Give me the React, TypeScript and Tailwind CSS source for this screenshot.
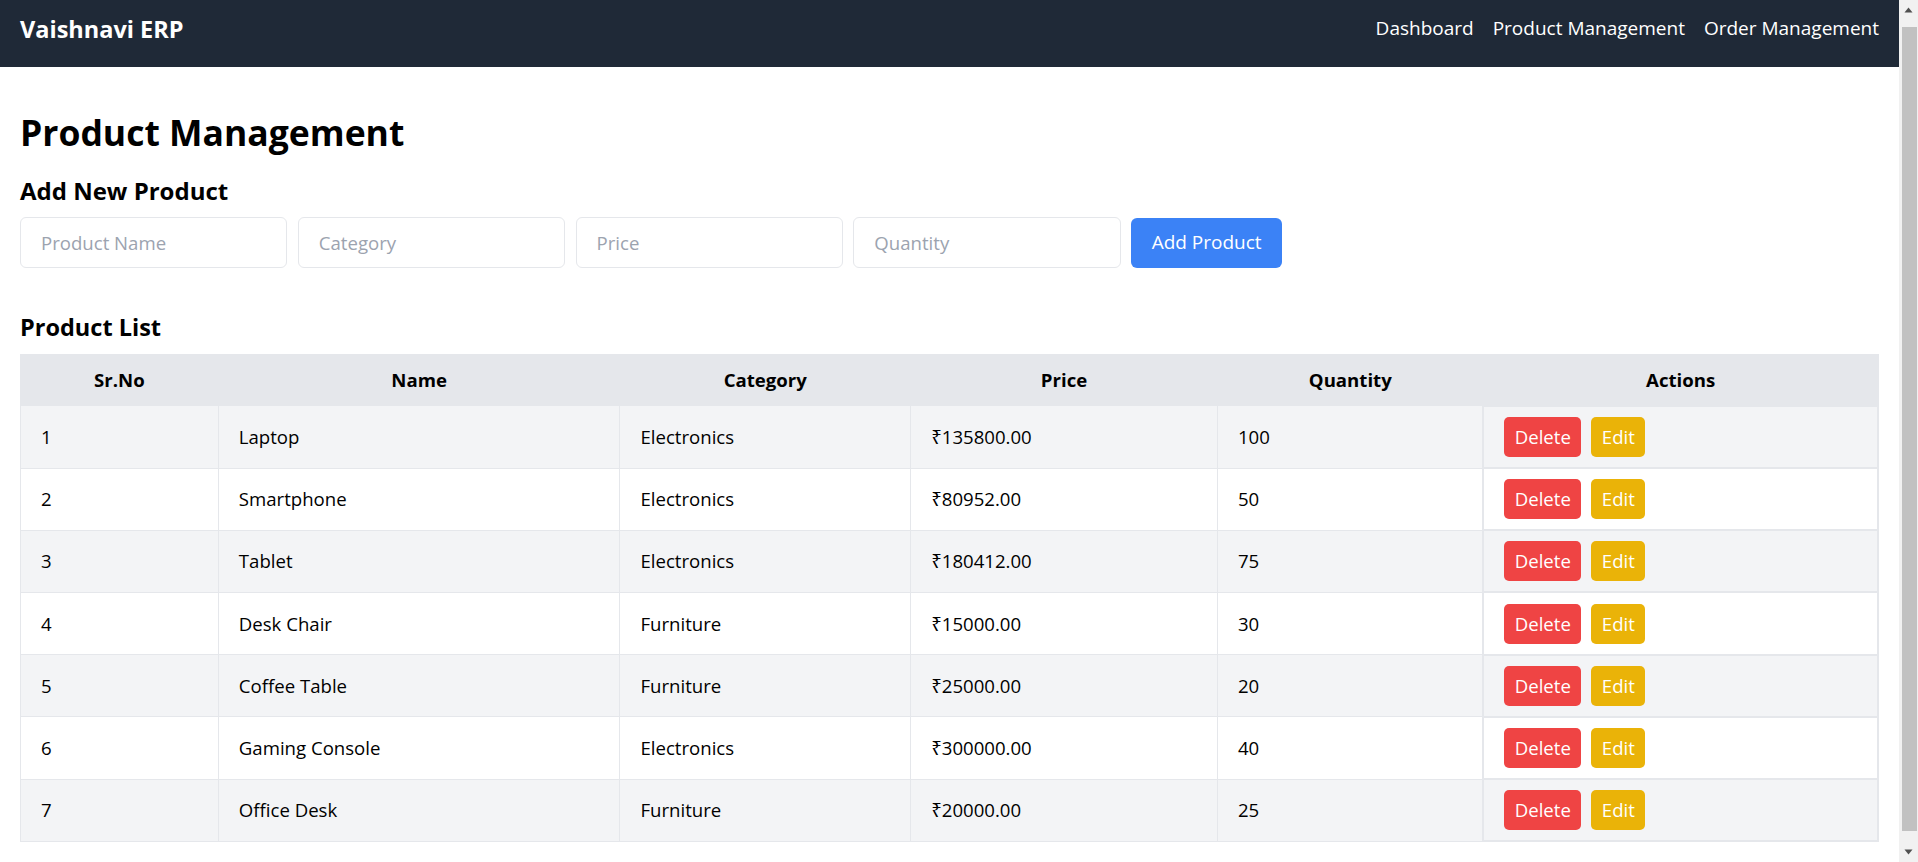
import React from "react";

type Product = { id: number; name: string; category: string; price: string; qty: number };

const products: Product[] = [
  { id: 1, name: "Laptop", category: "Electronics", price: "₹135800.00", qty: 100 },
  { id: 2, name: "Smartphone", category: "Electronics", price: "₹80952.00", qty: 50 },
  { id: 3, name: "Tablet", category: "Electronics", price: "₹180412.00", qty: 75 },
  { id: 4, name: "Desk Chair", category: "Furniture", price: "₹15000.00", qty: 30 },
  { id: 5, name: "Coffee Table", category: "Furniture", price: "₹25000.00", qty: 20 },
  { id: 6, name: "Gaming Console", category: "Electronics", price: "₹300000.00", qty: 40 },
  { id: 7, name: "Office Desk", category: "Furniture", price: "₹20000.00", qty: 25 },
];

const inputs = ["Product Name", "Category", "Price", "Quantity"];

function Scrollbar() {
  return (
    <div className="fixed right-0 top-0 flex h-screen w-[19px] flex-col items-center bg-[#f1f1f1]">
      <div className="flex h-[20px] w-full items-center justify-center">
        <svg width="9" height="6" viewBox="0 0 9 6">
          <path d="M4.5 0.5 L8.5 5.5 L0.5 5.5 Z" fill="#505050" />
        </svg>
      </div>
      <div className="ml-[2px] mt-[7px] h-[804px] w-[15px] bg-[#c1c1c1]" />
      <div className="mt-auto flex h-[20px] w-full items-center justify-center">
        <svg width="9" height="6" viewBox="0 0 9 6">
          <path d="M0.5 0.5 L8.5 0.5 L4.5 5.5 Z" fill="#505050" />
        </svg>
      </div>
    </div>
  );
}

export default function App() {
  return (
    <div className="min-h-screen bg-white text-black font-['Open_Sans',_'Noto_Sans',_sans-serif]">
      <div className="w-[1899px]">
        <nav className="flex h-[67px] items-start justify-between bg-[#1f2937] px-5 text-white">
          <div className="mt-[13px] text-[23.5px] font-bold leading-[32px]">Vaishnavi ERP</div>
          <div className="mt-[15.5px] flex gap-[19px] text-[19px] leading-[24px]">
            <a>Dashboard</a>
            <a>Product Management</a>
            <a>Order Management</a>
          </div>
        </nav>

        <main className="px-5 pt-[45px] pb-10">
          <h1 className="text-[35.5px] font-bold leading-[40px]">Product Management</h1>

          <h2 className="mt-[22.5px] text-[24px] font-bold leading-[32px]">Add New Product</h2>
          <div className="mt-[10.6px] flex items-center gap-[10.6px]">
            {inputs.map((p) => (
              <input
                key={p}
                placeholder={p}
                className="h-[51px] w-[267.2px] rounded-[6px] border border-[#e5e7eb] px-5 text-[18.6px] outline-none placeholder:text-[#9ca3af]"
              />
            ))}
            <button className="h-[50px] rounded-[6px] bg-[#3b82f6] px-[20.5px] text-[19px] text-white">
              Add Product
            </button>
          </div>

          <h2 className="mt-[43px] text-[23.5px] font-bold leading-[32px]">Product List</h2>
          <table className="mt-[10.6px] w-full border-collapse text-[18.6px]">
            <thead>
              <tr className="h-[51.7px] bg-[#e5e7eb]">
                <th className="w-[10.65%] border border-[#e5e7eb] font-bold">Sr.No</th>
                <th className="w-[21.62%] border border-[#e5e7eb] font-bold">Name</th>
                <th className="w-[15.65%] border border-[#e5e7eb] font-bold">Category</th>
                <th className="w-[16.51%] border border-[#e5e7eb] font-bold">Price</th>
                <th className="w-[14.31%] border border-[#e5e7eb] font-bold">Quantity</th>
                <th className="w-[21.25%] border border-[#e5e7eb] font-bold">Actions</th>
              </tr>
            </thead>
            <tbody>
              {products.map((p, i) => (
                <tr key={p.id} className={`h-[62.2px] ${i % 2 === 0 ? "bg-[#f3f4f6]" : "bg-white"}`}>
                  <td className="border border-[#e5e7eb] px-5">{p.id}</td>
                  <td className="border border-[#e5e7eb] px-5">{p.name}</td>
                  <td className="border border-[#e5e7eb] px-5">{p.category}</td>
                  <td className="border border-[#e5e7eb] px-5">{p.price}</td>
                  <td className="border border-[#e5e7eb] px-5">{p.qty}</td>
                  <td className="border-2 border-[#e5e7eb] px-5">
                    <div className="flex items-center gap-[10px]">
                      <button className="h-[40px] rounded-[5px] bg-[#ef4444] px-[10.5px] text-white">Delete</button>
                      <button className="h-[40px] rounded-[5px] bg-[#eab308] px-[10.5px] text-white">Edit</button>
                    </div>
                  </td>
                </tr>
              ))}
            </tbody>
          </table>
        </main>
      </div>
      <Scrollbar />
    </div>
  );
}
